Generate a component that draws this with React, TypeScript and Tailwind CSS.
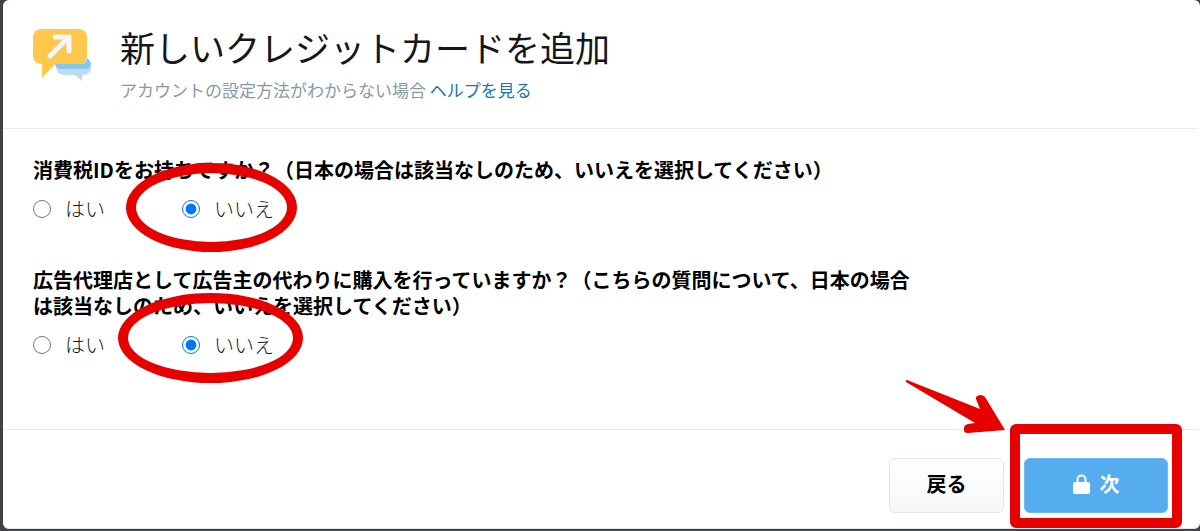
import { useState } from "react"

const questions = [
	{
		id: "tax-id",
		text: "消費税IDをお持ちですか？（日本の場合は該当なしのため、いいえを選択してください）",
	},
	{
		id: "agency",
		text: "広告代理店として広告主の代わりに購入を行っていますか？（こちらの質問について、日本の場合は該当なしのため、いいえを選択してください）",
	},
]

function AdsLogo() {
	return (
		<svg width="58" height="54" viewBox="0 0 58 54" aria-hidden="true">
			<path
				d="M30 30h20a8 8 0 0 1 0 17h-1v6l-7-6H31a8 8 0 0 1-8-8v-3z"
				fill="#bcdcf5"
			/>
			<path
				d="M22 36h26c4 0 6-2 6-6 3 2 4 5 3 9-1 2-3 2-6 2H29q-6 0-7-5z"
				fill="#86c5ee"
			/>
			<path
				d="M8 1h38a8 8 0 0 1 8 8v19a8 8 0 0 1-8 8H22L9 50V36H8a8 8 0 0 1-8-8V9a8 8 0 0 1 8-8z"
				fill="#ffc84c"
			/>
			<path
				d="M17 28 35 10M22 9h14v14"
				fill="none"
				stroke="#f2f6f8"
				strokeWidth="5"
				strokeLinecap="round"
				strokeLinejoin="round"
			/>
		</svg>
	)
}

function LockIcon() {
	return (
		<svg width="17" height="20" viewBox="0 0 17 20" aria-hidden="true">
			<path
				d="M4.5 9V5.5a4 4 0 0 1 8 0V9"
				fill="none"
				stroke="#fff"
				strokeWidth="2"
			/>
			<rect y="8" width="17" height="12" rx="2" fill="#fff" />
		</svg>
	)
}

function Question({ id, text }: { id: string; text: string }) {
	const [answer, setAnswer] = useState("no")

	return (
		<fieldset>
			<legend className="max-w-[890px] text-[20px] leading-[26px] font-bold text-black">
				{text}
			</legend>
			<div className="mt-3 flex h-7">
				<label className="flex w-[149px] items-center gap-3.5">
					<input
						type="radio"
						name={id}
						className="size-[18px]"
						checked={answer === "yes"}
						onChange={() => setAnswer("yes")}
					/>
					はい
				</label>
				<label className="relative flex items-center gap-3.5">
					<input
						type="radio"
						name={id}
						className="size-[18px]"
						checked={answer === "no"}
						onChange={() => setAnswer("no")}
					/>
					いいえ
					{id === "tax-id" ? (
						<span className="pointer-events-none absolute -top-8 -left-14 h-[89px] w-[171px] rounded-[50%] border-[10px] border-[#e60000]" />
					) : (
						<span className="pointer-events-none absolute -top-[38px] -left-16 h-[90px] w-[185px] rounded-[50%] border-[10px] border-[#e60000]" />
					)}
				</label>
			</div>
		</fieldset>
	)
}

export default function App() {
	return (
		<div className="min-h-screen bg-[#424245] pb-0.5 pl-[3px] font-['Noto_Sans_CJK_JP',sans-serif]">
			<main className="rounded-md border-b border-[#dfe8ee] bg-white pr-0.5 text-[20px] leading-7 text-[#14171a]">
				<header className="flex gap-[29px] border-b border-[#e6ecf0] px-[30px] pt-7 pb-[26px]">
					<AdsLogo />
					<div>
						<h1 className="-mt-1 text-[35px] leading-[46px]">
							新しいクレジットカードを追加
						</h1>
						<p className="mt-2 text-[17px] leading-6 text-[#8899a6]">
							アカウントの設定方法がわからない場合{" "}
							<a href="#help" className="text-[#1b72ba]">
								ヘルプを見る
							</a>
						</p>
					</div>
				</header>
				<form className="font-light" onSubmit={(e) => e.preventDefault()}>
					<div className="flex flex-col gap-11 px-[30px] pt-7 pb-[70px]">
						{questions.map((question) => (
							<Question key={question.id} {...question} />
						))}
					</div>
					<footer className="flex justify-end gap-5 border-t border-[#e6ecf0] px-[30px] pt-7 pb-[15px]">
						<button
							type="button"
							className="h-[55px] w-[115px] rounded-md border border-[#e1e8ed] bg-linear-to-b from-white to-[#f5f8fa] pb-1 font-bold text-black"
						>
							戻る
						</button>
						<div className="relative">
							<button
								type="submit"
								className="flex h-[55px] w-36 items-center justify-center gap-2.5 rounded-md border border-[#6fb9f2] bg-[#55acee] pb-1 font-bold text-white"
							>
								<LockIcon />
								次
							</button>
							<span className="pointer-events-none absolute -inset-x-3.5 -top-[34px] -bottom-[15px] rounded-md border-[10px] border-[#e60000]" />
							<svg
								className="pointer-events-none absolute -top-[79px] -left-[120px]"
								width="102"
								height="56"
								viewBox="0 0 102 56"
								aria-hidden="true"
							>
								<path
									d="M3 1 76 30 72 20Q71 17 76 16 79 16 81 18L101 51 64 54Q59 54 60 49 60 46 64 45L71 44 2 3Q1 1 3 1z"
									fill="#e60000"
								/>
							</svg>
						</div>
					</footer>
				</form>
			</main>
		</div>
	)
}
